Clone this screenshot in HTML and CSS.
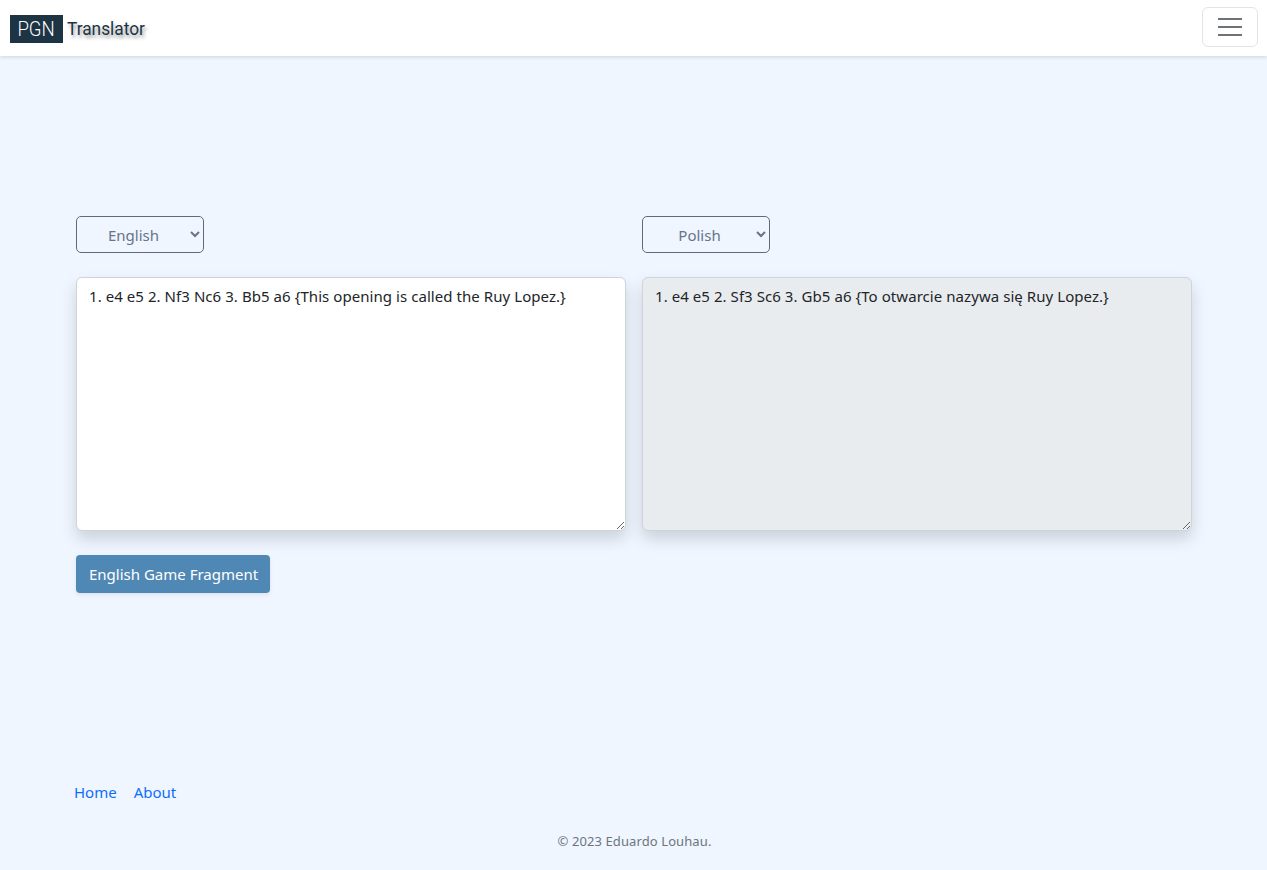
FILE: index.html
```html
<!DOCTYPE html>
<html lang="en">
<head>
<meta charset="UTF-8">
<title>PGN Translator</title>
<link rel="stylesheet" href="styles.css">
</head>
<body>

<nav class="navbar">
  <a class="brand" href="#">
    <span class="brand-box"><span class="brand-pgn">PGN</span></span>
    <span class="brand-text">Translator</span>
  </a>
  <button class="toggler" type="button" aria-label="Toggle navigation">
    <svg width="30" height="30" viewBox="0 0 30 30" aria-hidden="true">
      <path d="M3 7h24M3 15h24M3 23h24" stroke="#6f7275" stroke-width="2" fill="none"/>
    </svg>
  </button>
</nav>

<main class="translator">
  <div class="pane">
    <select class="lang">
      <option>English</option>
    </select>
    <textarea class="pgn">1. e4 e5 2. Nf3 Nc6 3. Bb5 a6 {This opening is called the Ruy Lopez.}</textarea>
    <button class="btn" type="button">English Game Fragment</button>
  </div>
  <div class="pane">
    <select class="lang">
      <option>Polish</option>
    </select>
    <textarea class="pgn" disabled>1. e4 e5 2. Sf3 Sc6 3. Gb5 a6 {To otwarcie nazywa się Ruy Lopez.}</textarea>
  </div>
</main>

<footer class="foot">
  <ul class="foot-links">
    <li><a href="#">Home</a></li>
    <li><a href="#">About</a></li>
  </ul>
  <p class="copy">© 2023 Eduardo Louhau.</p>
</footer>

</body>
</html>
```

FILE: styles.css
```css
:root {
  --page: #eff6ff;
  --ink: #212529;
  --navy: #1c3444;
  --link: #0d6efd;
  --line: #ced4da;
}
* { margin: 0; padding: 0; box-sizing: border-box; }
html, body { height: 100%; }
body {
  background: var(--page);
  color: var(--ink);
  font-family: "Noto Sans", "Open Sans", sans-serif;
  font-size: 15px;
  line-height: 24px;
  overflow: hidden;
}
a { text-decoration: none; }

/* navbar */
.navbar {
  height: 56px;
  background: #fff;
  display: flex;
  align-items: center;
  justify-content: space-between;
  padding: 0 9px 0 10px;
  box-shadow: 0 1px 4px rgba(0,0,0,0.14);
}
.brand { display: flex; align-items: center; gap: 4px; margin-top: 2px; color: var(--navy); }
.brand-box {
  width: 53px;
  height: 28px;
  background: var(--navy);
  color: #fff;
  font-family: "Roboto", sans-serif;
  font-size: 20px;
  font-weight: 300;
  line-height: 28px;
  text-align: center;
}
/* no condensed face installed, so squeeze Roboto */
.brand-pgn { display: inline-block; transform: scaleX(0.93); }
.brand-text {
  display: inline-block;
  font-family: "Roboto", sans-serif;
  font-size: 19px;
  line-height: 28px;
  text-shadow: 2px 3px 4px rgba(0,0,0,0.4);
  transform: scaleX(0.91);
  transform-origin: left center;
}
.toggler {
  width: 56px;
  height: 40px;
  margin-bottom: 2px;
  background: transparent;
  border: 1px solid #e4e4e4;
  border-radius: 6px;
  display: flex;
  align-items: center;
  justify-content: center;
}

/* main columns */
.translator {
  display: grid;
  grid-template-columns: 550px 550px;
  gap: 16px;
  padding: 160px 0 0 76px;
}
.pane { display: flex; flex-direction: column; align-items: flex-start; }
.lang {
  width: 128px;
  height: 37px;
  background: transparent;
  border: 1px solid #5f6b7a;
  border-radius: 5px;
  color: #66758a;
  font: inherit;
  text-align: center;
  padding: 0 12px 0 11px;
}
.pgn {
  width: 550px;
  height: 254px;
  margin-top: 24px;
  padding: 6px 12px;
  background: #fff;
  border: 1px solid var(--line);
  border-radius: 6px;
  color: var(--ink);
  font: inherit;
  letter-spacing: 0.06px;
  box-shadow: 0 8px 16px rgba(0,0,0,0.15);
}
.pgn:disabled { background: #e9ecef; color: var(--ink); }
.btn {
  height: 38px;
  margin-top: 24px;
  padding: 0 13px 0 13px;
  width: 194px;
  background: #5088b5;
  border: 0;
  border-radius: 4px;
  color: #fff;
  font: inherit;
  box-shadow: 0 2px 4px rgba(0,0,0,0.08);
  white-space: nowrap;
}

/* footer */
.foot { position: absolute; left: 0; right: 0; bottom: 17px; }
.foot-links { display: flex; gap: 17px; list-style: none; padding-left: 74px; }
.foot-links a { color: var(--link); }
.copy { margin-top: 25px; padding-left: 2px; text-align: center; font-size: 13px; letter-spacing: 0.1px; color: #6c757d; }
```
